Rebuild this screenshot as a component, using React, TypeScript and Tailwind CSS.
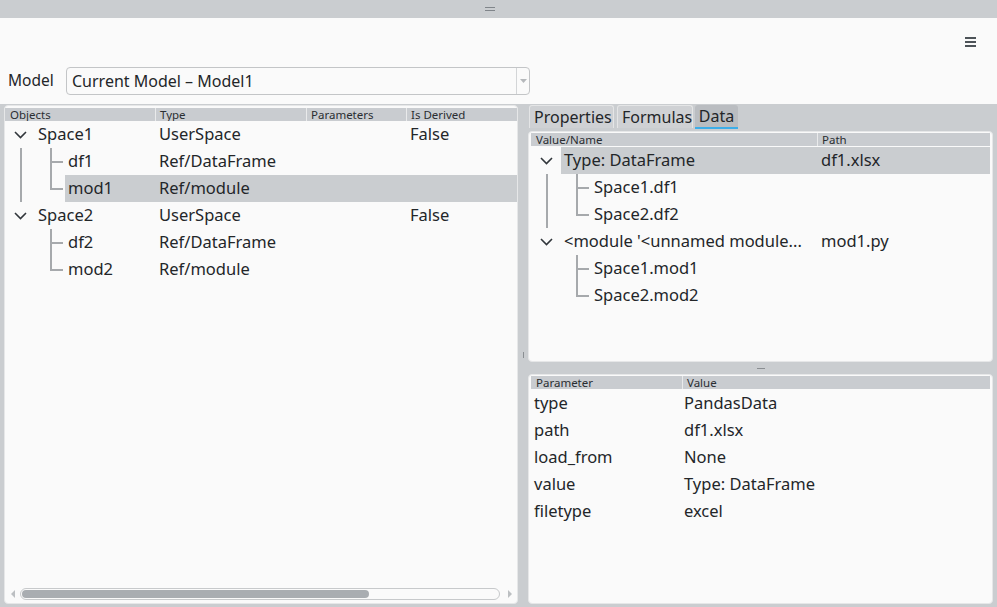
import React from 'react';

type Guide = 'none' | 'line' | 'tee' | 'corner' | 'chevron';

const LINE = 'bg-[#a6a9ac]';

const Gutter: React.FC<{ kind: Guide }> = ({ kind }) => (
  <div className="relative w-[30px] shrink-0 self-stretch">
    {kind === 'line' && <span className={`absolute left-[15px] top-0 bottom-0 w-[2px] ${LINE}`} />}
    {kind === 'tee' && (
      <>
        <span className={`absolute left-[15px] top-0 bottom-0 w-[2px] ${LINE}`} />
        <span className={`absolute left-[15px] top-[13px] w-[13px] h-[2px] ${LINE}`} />
      </>
    )}
    {kind === 'corner' && (
      <>
        <span className={`absolute left-[15px] top-0 h-[15px] w-[2px] ${LINE}`} />
        <span className={`absolute left-[15px] top-[13px] w-[13px] h-[2px] ${LINE}`} />
      </>
    )}
    {kind === 'chevron' && (
      <svg className="absolute left-[9px] top-[10px]" width="13" height="8" viewBox="0 0 13 8">
        <path d="M1 1 L6.5 6.5 L12 1" fill="none" stroke="#31363b" strokeWidth="1.6" />
      </svg>
    )}
  </div>
);

interface ObjRow {
  guides: Guide[];
  name: string;
  type: string;
  derived?: string;
  selected?: boolean;
}

const objRows: ObjRow[] = [
  { guides: ['chevron'], name: 'Space1', type: 'UserSpace', derived: 'False' },
  { guides: ['line', 'tee'], name: 'df1', type: 'Ref/DataFrame' },
  { guides: ['line', 'corner'], name: 'mod1', type: 'Ref/module', selected: true },
  { guides: ['chevron'], name: 'Space2', type: 'UserSpace', derived: 'False' },
  { guides: ['none', 'tee'], name: 'df2', type: 'Ref/DataFrame' },
  { guides: ['none', 'corner'], name: 'mod2', type: 'Ref/module' },
];

interface DataRow {
  guides: Guide[];
  name: string;
  path?: string;
  selected?: boolean;
}

const dataRows: DataRow[] = [
  { guides: ['chevron'], name: 'Type: DataFrame', path: 'df1.xlsx', selected: true },
  { guides: ['line', 'tee'], name: 'Space1.df1' },
  { guides: ['line', 'corner'], name: 'Space2.df2' },
  { guides: ['chevron'], name: "<module '<unnamed module...", path: 'mod1.py' },
  { guides: ['none', 'tee'], name: 'Space1.mod1' },
  { guides: ['none', 'corner'], name: 'Space2.mod2' },
];

const params: [string, string][] = [
  ['type', 'PandasData'],
  ['path', 'df1.xlsx'],
  ['load_from', 'None'],
  ['value', 'Type: DataFrame'],
  ['filetype', 'excel'],
];

const HeaderCell: React.FC<{ w?: string; first?: boolean; children: React.ReactNode }> = ({ w, first, children }) => (
  <div className={`${w ?? 'flex-1'} h-full flex items-center ${first ? 'pl-[5px]' : 'pl-[4px] border-l border-[#e9eaeb]'} text-[11.5px] leading-none text-[#2a2e32] whitespace-nowrap overflow-hidden`}>
    {children}
  </div>
);

export default function App() {
  return (
    <div className="w-[997px] h-[607px] bg-[#fafafa] flex flex-col overflow-hidden font-['Noto_Sans','Noto_Sans_CJK_JP',sans-serif] text-[#232629]">
      {/* top dock handle */}
      <div className="h-[18px] shrink-0 bg-[#cacdd0] flex items-center justify-center">
        <div className="mr-[17px] flex flex-col gap-[2px]">
          <span className="block w-[10px] h-px bg-[#80858a]" />
          <span className="block w-[10px] h-px bg-[#80858a]" />
        </div>
      </div>

      {/* toolbar */}
      <div className="h-[48px] shrink-0 flex items-center justify-end pr-[21px]">
        <div className="flex flex-col gap-[2.5px]">
          <span className="block w-[11px] h-[1.5px] bg-[#4d5358]" />
          <span className="block w-[11px] h-[1.5px] bg-[#4d5358]" />
          <span className="block w-[11px] h-[1.5px] bg-[#4d5358]" />
        </div>
      </div>

      {/* model selector */}
      <div className="h-[38px] shrink-0 flex items-start pl-[8px] pt-[1px]">
        <div className="w-[58px] h-[28px] flex items-center text-[15.5px]">Model</div>
        <div className="w-[464px] h-[28px] rounded-[4px] border border-[#c3c5c7] bg-[#fafafa] flex">
          <div className="flex-1 flex items-center pl-[5px] text-[16px] whitespace-nowrap">Current Model – Model1</div>
          <div className="w-[13px] border-l border-[#d3d5d7] flex items-center justify-center">
            <svg width="7" height="4" viewBox="0 0 7 4"><path d="M0 0 H7 L3.5 4 Z" fill="#b5b8bb" /></svg>
          </div>
        </div>
      </div>

      {/* main area */}
      <div className="flex-1 bg-[#cacdd0] flex pt-[1px] pb-[3px] pl-[4px] pr-[4px]">
        {/* objects tree */}
        <div className="w-[514px] shrink-0 rounded-[4px] border border-[#e6e7e8] bg-[#fafafa] flex flex-col py-[1px]">
          <div className="h-[13px] mt-[1px] shrink-0 flex bg-[#c9ccd0]">
            <HeaderCell w="w-[150px]" first>Objects</HeaderCell>
            <HeaderCell w="w-[151px]">Type</HeaderCell>
            <HeaderCell w="w-[100px]">Parameters</HeaderCell>
            <HeaderCell>Is Derived</HeaderCell>
          </div>
          {objRows.map((r, i) => (
            <div key={i} className="h-[27px] flex text-[16.5px]">
              {r.guides.map((g, j) => <Gutter key={j} kind={g} />)}
              <div className={`flex-1 flex items-center ${r.selected ? 'bg-[#cacdd0]' : ''}`}>
                <div className="pl-[3px] whitespace-nowrap" style={{ width: 150 - r.guides.length * 30 }}>{r.name}</div>
                <div className="w-[151px] pl-[4px] whitespace-nowrap">{r.type}</div>
                <div className="w-[100px]" />
                <div className="flex-1 pl-[4px]">{r.derived ?? ''}</div>
              </div>
            </div>
          ))}
          <div className="flex-1" />
          {/* horizontal scrollbar */}
          <div className="h-[12px] mb-[2px] flex items-center">
            <div className="w-[15px] flex justify-end pr-[5px]">
              <svg width="4" height="8" viewBox="0 0 4 8"><path d="M4 0 V8 L0 4 Z" fill="#bcbfc2" /></svg>
            </div>
            <div className="w-[480px] h-[12px] rounded-full border border-[#c7c9cb] p-px flex">
              <div className="w-[347px] h-full rounded-full bg-[#a9adb1]" />
            </div>
            <div className="flex-1 flex pl-[8px]">
              <svg width="4" height="8" viewBox="0 0 4 8"><path d="M0 0 V8 L4 4 Z" fill="#bcbfc2" /></svg>
            </div>
          </div>
        </div>

        {/* vertical splitter */}
        <div className="w-[10px] shrink-0 flex items-center justify-center">
          <span className="block w-px h-[6px] bg-[#8a8e92]" />
        </div>

        {/* right column */}
        <div className="flex-1 flex flex-col">
          <div className="h-[26px] shrink-0 flex items-start pl-[1px] text-[16px]">
            <div className="w-[85px] h-[23px] mr-[3px] rounded-t-[3px] border border-b-0 border-[#e4e5e6] bg-[#cfd1d4] flex items-center pl-[4px] whitespace-nowrap">Properties</div>
            <div className="w-[76px] h-[23px] mr-[2px] rounded-t-[3px] border border-b-0 border-[#e4e5e6] bg-[#cfd1d4] flex items-center pl-[4px] whitespace-nowrap">Formulas</div>
            <div className="w-[43px] h-[24px] rounded-t-[3px] bg-[#babdc1] border-b-[2px] border-[#3daee9] flex items-center justify-center whitespace-nowrap">Data</div>
          </div>

          {/* data tree */}
          <div className="h-[231px] shrink-0 rounded-[4px] border border-[#e6e7e8] bg-[#fafafa] flex flex-col px-[2px]">
            <div className="h-[13px] mt-[1px] mb-[1px] shrink-0 flex bg-[#c9ccd0]">
              <HeaderCell w="w-[286px]" first>Value/Name</HeaderCell>
              <HeaderCell>Path</HeaderCell>
            </div>
            {dataRows.map((r, i) => (
              <div key={i} className="h-[27px] flex text-[16.5px]">
                {r.guides.map((g, j) => <Gutter key={j} kind={g} />)}
                <div className={`flex-1 flex items-center ${r.selected ? 'bg-[#cacdd0]' : ''}`}>
                  <div className="pl-[3px] whitespace-nowrap overflow-hidden" style={{ width: 286 - r.guides.length * 30 }}>{r.name}</div>
                  <div className="flex-1 pl-[4px] whitespace-nowrap">{r.path ?? ''}</div>
                </div>
              </div>
            ))}
          </div>

          {/* horizontal splitter */}
          <div className="h-[12px] shrink-0 flex items-center justify-center">
            <span className="block w-[8px] h-px bg-[#8a8e92]" />
          </div>

          {/* parameters */}
          <div className="flex-1 rounded-[4px] border border-[#e6e7e8] bg-[#fafafa] flex flex-col px-[2px]">
            <div className="h-[13px] mt-[1px] mb-[1px] shrink-0 flex bg-[#c9ccd0]">
              <HeaderCell w="w-[151px]" first>Parameter</HeaderCell>
              <HeaderCell>Value</HeaderCell>
            </div>
            {params.map(([k, v]) => (
              <div key={k} className="h-[27px] flex items-center text-[16.5px]">
                <div className="w-[151px] pl-[3px] whitespace-nowrap">{k}</div>
                <div className="flex-1 pl-[2px] whitespace-nowrap">{v}</div>
              </div>
            ))}
          </div>
        </div>
      </div>
    </div>
  );
}
